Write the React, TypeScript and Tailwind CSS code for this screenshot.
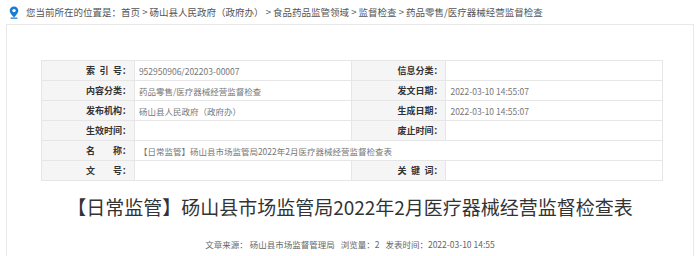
import React from "react";

const font = { fontFamily: '"Noto Sans CJK SC", "Noto Sans", sans-serif' };

function Label({ children }: { children: React.ReactNode }) {
  return (
    <td className="h-[20px] border border-[#e6e6e6] bg-[#f5f5f5] pr-[3px] text-right text-[9px] font-bold text-[#333] whitespace-pre">
      {children}
    </td>
  );
}

function Value({ children, span }: { children?: React.ReactNode; span?: number }) {
  return (
    <td colSpan={span} className="h-[20px] border border-[#e6e6e6] bg-white pl-[4px] text-[#777]">
      {children}
    </td>
  );
}

function PinIcon() {
  return (
    <svg width="10" height="13" viewBox="0 0 10 13" className="mt-[1px]">
      <path d="M5 0.5C2.5 0.5 0.7 2.3 0.7 4.7C0.7 7.6 5 11.2 5 11.2C5 11.2 9.3 7.6 9.3 4.7C9.3 2.3 7.5 0.5 5 0.5Z" fill="#1a7bd0" />
      <circle cx="5" cy="4.6" r="1.7" fill="#fff" />
      <rect x="1.5" y="11.6" width="7" height="1.2" rx="0.6" fill="#1a7bd0" />
    </svg>
  );
}

export default function App() {
  return (
    <div className="h-[256px] w-[700px] overflow-hidden bg-white" style={font}>
      <div className="flex h-[24px] items-center gap-[7px] pl-[9px] text-[9.5px] text-[#555]">
        <PinIcon />
        <span>
          您当前所在的位置是：首页 &gt; 砀山县人民政府（政府办） &gt; 食品药品监管领域 &gt; 监督检查 &gt; 药品零售/医疗器械经营监督检查
        </span>
      </div>
      <div className="mx-[6px] h-[240px] border border-[#e8e8e8] pt-[35px]">
        <table className="ml-[34px] w-[622px] border-collapse text-[8.5px] leading-[18px]">
          <colgroup>
            <col className="w-[93px]" />
            <col className="w-[217px]" />
            <col className="w-[95px]" />
            <col className="w-[217px]" />
          </colgroup>
          <tbody>
            <tr>
              <Label>{"索\u2002引\u2002号："}</Label>
              <Value>952950906/202203-00007</Value>
              <Label>信息分类：</Label>
              <Value />
            </tr>
            <tr>
              <Label>内容分类：</Label>
              <Value>药品零售/医疗器械经营监督检查</Value>
              <Label>发文日期：</Label>
              <Value>2022-03-10 14:55:07</Value>
            </tr>
            <tr>
              <Label>发布机构：</Label>
              <Value>砀山县人民政府（政府办）</Value>
              <Label>生成日期：</Label>
              <Value>2022-03-10 14:55:07</Value>
            </tr>
            <tr>
              <Label>生效时间：</Label>
              <Value />
              <Label>废止时间：</Label>
              <Value />
            </tr>
            <tr>
              <Label>名　　称：</Label>
              <Value span={3}>【日常监管】砀山县市场监管局2022年2月医疗器械经营监督检查表</Value>
            </tr>
            <tr>
              <Label>文　　号：</Label>
              <Value />
              <Label>{"关\u2002键\u2002词："}</Label>
              <Value />
            </tr>
          </tbody>
        </table>
        <h1 className="mt-[11px] text-center text-[19px] leading-[30px] text-[#333]">
          【日常监管】砀山县市场监管局2022年2月医疗器械经营监督检查表
        </h1>
        <div className="mt-[16px] flex justify-center gap-[6px] text-[8.5px] leading-[12px] text-[#666]">
          <span>文章来源： 砀山县市场监督管理局</span>
          <span>浏览量：2</span>
          <span>发表时间：2022-03-10 14:55</span>
        </div>
      </div>
    </div>
  );
}
